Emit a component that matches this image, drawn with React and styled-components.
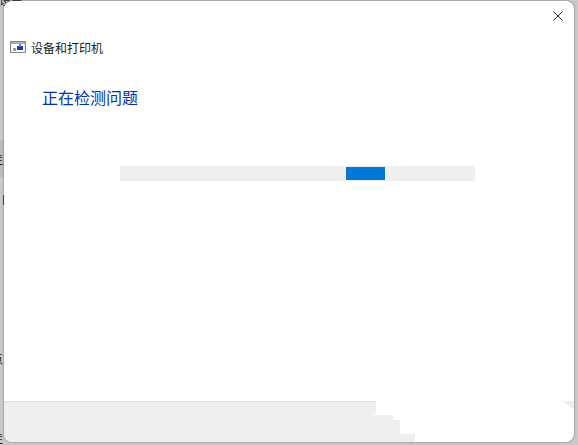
import React from 'react';
import styled, { createGlobalStyle } from 'styled-components';

const Global = createGlobalStyle`
    html, body {
        margin: 0;
        height: 100%;
    }
    #root {
        height: 100%;
    }
`;

const Desktop = styled.div`
    position: relative;
    box-sizing: border-box;
    width: 578px;
    height: 445px;
    padding: 1px 4px 3px 4px;
    overflow: hidden;
    background: #c9c9c9;
    font-family: 'Noto Sans CJK SC', sans-serif;
`;

const BehindText = styled.span`
    position: absolute;
    left: ${p => p.$left}px;
    top: ${p => p.$top}px;
    font-size: 12px;
    line-height: 14px;
    color: #222;
`;

const BehindBand = styled.div`
    position: absolute;
    left: ${p => p.$left}px;
    width: ${p => p.$width}px;
    top: ${p => p.$top}px;
    height: ${p => p.$height}px;
    background: ${p => p.$color};
`;

const Window = styled.div`
    position: relative;
    display: flex;
    flex-direction: column;
    height: 100%;
    overflow: hidden;
    background: #fff;
    border-radius: 8px;
    box-shadow: 0 0 2px rgba(0, 0, 0, 0.55);
`;

const TitleBar = styled.div`
    display: flex;
    justify-content: flex-end;
    height: 31px;
    padding: 6px 11px 0 0;
    box-sizing: border-box;
`;

const CloseButton = styled.button`
    display: flex;
    align-items: center;
    justify-content: center;
    width: 10px;
    height: 10px;
    margin-top: 4px;
    padding: 0;
    border: 0;
    background: none;
`;

const Crumb = styled.div`
    display: flex;
    align-items: center;
    gap: 5px;
    height: 16px;
    margin-top: 7px;
    padding-left: 6px;
    font-size: 12px;
    color: #1a1a1a;
`;

const Heading = styled.h1`
    margin: 31px 0 0 38px;
    font-size: 16px;
    font-weight: 400;
    line-height: 22px;
    color: #0033bc;
`;

const Track = styled.div`
    display: flex;
    width: 355px;
    height: 15px;
    margin: 58px 0 0 116px;
    background: #efefef;
`;

const Bar = styled.div`
    width: 39px;
    height: 13px;
    margin: 1px 0 0 226px;
    background: #0078d7;
`;

const Body = styled.div`
    flex: 1;
`;

const Footer = styled.div`
    height: 40px;
    border-top: 1px solid #e2e2e2;
    background: #efefef;
    clip-path: polygon(
        0 0, 372px 0, 372px 13px, 369px 13px, 369px 14px, 389px 14px,
        389px 19px, 396px 19px, 396px 33px, 411px 33px, 411px 100%, 0 100%
    );
`;

const CornerShade = styled.div`
    position: absolute;
    right: 0;
    bottom: 33px;
    width: 12px;
    height: 8px;
    background: #ededed;
    clip-path: polygon(0 0, 100% 0, 100% 100%);
`;

const PrinterIcon = () => (
    <svg width="16" height="12" viewBox="0 0 16 12">
        <rect x="0.5" y="0.5" width="15" height="11" fill="#efefef" stroke="#858585" />
        <rect x="1" y="1" width="14" height="2" fill="#a9adb5" />
        <rect x="2" y="3" width="12" height="8" fill="#fcfcfc" />
        <rect x="7" y="5" width="6" height="4" fill="#1838b8" />
        <rect x="9" y="3" width="2" height="3" fill="#4f7fe0" />
        <rect x="3" y="7" width="3" height="3" fill="#7fb07f" />
    </svg>
);

export default function App() {
    return (
        <>
            <Global />
            <Desktop>
                <BehindBand $left={0} $width={4} $top={140} $height={37} $color="#bdbdbd" />
                <BehindBand $left={3} $width={1} $top={195} $height={10} $color="#444" />
                <BehindText $left={-1} $top={-7}>设备</BehindText>
                <BehindText $left={-9} $top={152}>佳</BehindText>
                <BehindText $left={-9} $top={352}>点</BehindText>
                <BehindText $left={-9} $top={431}>佳</BehindText>
                <Window>
                    <TitleBar>
                        <CloseButton aria-label="关闭">
                            <svg width="10" height="10" viewBox="0 0 10 10">
                                <path d="M0.5 0.5 L9.5 9.5 M9.5 0.5 L0.5 9.5" stroke="#222" strokeWidth="1" />
                            </svg>
                        </CloseButton>
                    </TitleBar>
                    <Crumb>
                        <PrinterIcon />
                        设备和打印机
                    </Crumb>
                    <Heading>正在检测问题</Heading>
                    <Track>
                        <Bar />
                    </Track>
                    <Body />
                    <Footer />
                    <CornerShade />
                </Window>
            </Desktop>
        </>
    );
}
